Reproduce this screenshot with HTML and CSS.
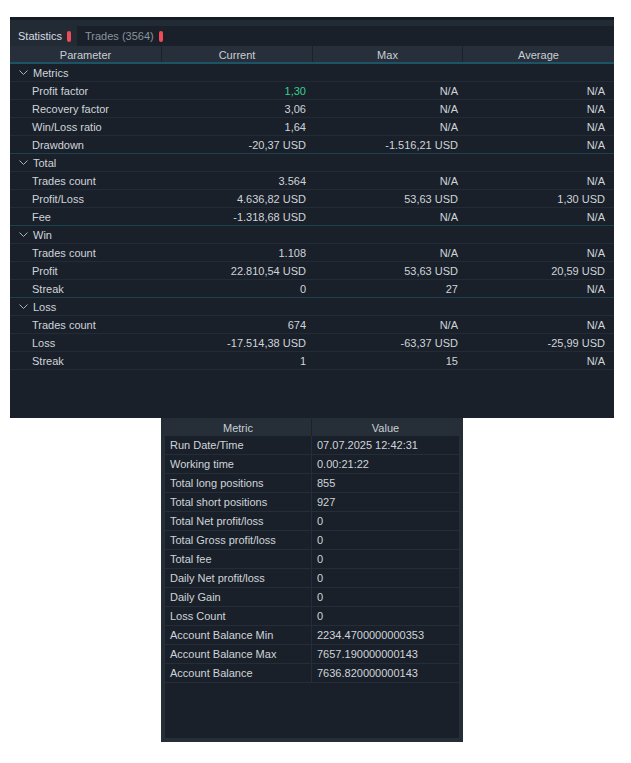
FILE: index.html
```html
<!DOCTYPE html>
<html>
<head>
<meta charset="utf-8">
<link rel="stylesheet" href="styles.css">
</head>
<body>
<div class="stats">
  <div class="topstrip"></div>
  <div class="tabs">
    <div class="tab active">Statistics <span class="pill"></span></div>
    <div class="tab">Trades (3564) <span class="pill"></span></div>
  </div>
  <div class="grid head">
    <div>Parameter</div><div>Current</div><div>Max</div><div>Average</div>
  </div>
  <div class="body">
    <div class="row sec"><div class="lbl"><svg class="chev" width="9" height="6" viewBox="0 0 9 6"><polyline points="0.5,0.5 4.5,4.5 8.5,0.5" fill="none" stroke="#aab2bb" stroke-width="1"/></svg>Metrics</div></div>
    <div class="row grid"><div class="lbl">Profit factor</div><div class="green">1,30</div><div>N/A</div><div>N/A</div></div>
    <div class="row grid"><div class="lbl">Recovery factor</div><div>3,06</div><div>N/A</div><div>N/A</div></div>
    <div class="row grid"><div class="lbl">Win/Loss ratio</div><div>1,64</div><div>N/A</div><div>N/A</div></div>
    <div class="row grid end"><div class="lbl">Drawdown</div><div>-20,37 USD</div><div>-1.516,21 USD</div><div>N/A</div></div>
    <div class="row sec"><div class="lbl"><svg class="chev" width="9" height="6" viewBox="0 0 9 6"><polyline points="0.5,0.5 4.5,4.5 8.5,0.5" fill="none" stroke="#aab2bb" stroke-width="1"/></svg>Total</div></div>
    <div class="row grid"><div class="lbl">Trades count</div><div>3.564</div><div>N/A</div><div>N/A</div></div>
    <div class="row grid"><div class="lbl">Profit/Loss</div><div>4.636,82 USD</div><div>53,63 USD</div><div>1,30 USD</div></div>
    <div class="row grid end"><div class="lbl">Fee</div><div>-1.318,68 USD</div><div>N/A</div><div>N/A</div></div>
    <div class="row sec"><div class="lbl"><svg class="chev" width="9" height="6" viewBox="0 0 9 6"><polyline points="0.5,0.5 4.5,4.5 8.5,0.5" fill="none" stroke="#aab2bb" stroke-width="1"/></svg>Win</div></div>
    <div class="row grid"><div class="lbl">Trades count</div><div>1.108</div><div>N/A</div><div>N/A</div></div>
    <div class="row grid"><div class="lbl">Profit</div><div>22.810,54 USD</div><div>53,63 USD</div><div>20,59 USD</div></div>
    <div class="row grid end"><div class="lbl">Streak</div><div>0</div><div>27</div><div>N/A</div></div>
    <div class="row sec"><div class="lbl"><svg class="chev" width="9" height="6" viewBox="0 0 9 6"><polyline points="0.5,0.5 4.5,4.5 8.5,0.5" fill="none" stroke="#aab2bb" stroke-width="1"/></svg>Loss</div></div>
    <div class="row grid"><div class="lbl">Trades count</div><div>674</div><div>N/A</div><div>N/A</div></div>
    <div class="row grid"><div class="lbl">Loss</div><div>-17.514,38 USD</div><div>-63,37 USD</div><div>-25,99 USD</div></div>
    <div class="row grid"><div class="lbl">Streak</div><div>1</div><div>15</div><div>N/A</div></div>
  </div>
</div>
<div class="metrics">
  <div class="inner">
    <div class="mhead"><div>Metric</div><div>Value</div></div>
    <div class="mrow"><div>Run Date/Time</div><div>07.07.2025 12:42:31</div></div>
    <div class="mrow"><div>Working time</div><div>0.00:21:22</div></div>
    <div class="mrow"><div>Total long positions</div><div>855</div></div>
    <div class="mrow"><div>Total short positions</div><div>927</div></div>
    <div class="mrow"><div>Total Net profit/loss</div><div>0</div></div>
    <div class="mrow"><div>Total Gross profit/loss</div><div>0</div></div>
    <div class="mrow"><div>Total fee</div><div>0</div></div>
    <div class="mrow"><div>Daily Net profit/loss</div><div>0</div></div>
    <div class="mrow"><div>Daily Gain</div><div>0</div></div>
    <div class="mrow"><div>Loss Count</div><div>0</div></div>
    <div class="mrow"><div>Account Balance Min</div><div>2234.4700000000353</div></div>
    <div class="mrow"><div>Account Balance Max</div><div>7657.190000000143</div></div>
    <div class="mrow"><div>Account Balance</div><div>7636.820000000143</div></div>
  </div>
</div>
</body>
</html>
```
FILE: styles.css
```css
html, body {
  margin: 0;
  padding: 0;
  background: #ffffff;
}
body {
  font-family: "Liberation Sans", Arial, sans-serif;
  font-size: 11px;
  color: #d0d4d9;
}
.stats {
  margin: 17px 0 0 10px;
  width: 604px;
  height: 401px;
  background: #19202a;
  display: flex;
  flex-direction: column;
}
.topstrip {
  height: 3px;
  background: #161c25;
  border-bottom: 6px solid #222a34;
}
.tabs {
  display: flex;
  height: 20px;
  align-items: stretch;
}
.tab {
  display: flex;
  align-items: center;
  gap: 5px;
  padding: 0 6px 0 8px;
  color: #8c939b;
}
.tab.active {
  background: #222a34;
  color: #d8dce0;
}
.pill {
  display: inline-block;
  width: 4px;
  height: 11px;
  border-radius: 2px;
  background: #f04c55;
}
.grid {
  display: grid;
  grid-template-columns: 152px 151px 150px 151px;
}
.head {
  height: 16px;
  background: #27303a;
  border-bottom: 2px solid #1d5367;
}
.head > div {
  display: flex;
  align-items: center;
  justify-content: center;
  padding-top: 2px;
  border-right: 1px solid #1b222c;
  color: #c9ced4;
}
.head > div:last-child {
  border-right: none;
}
.row {
  height: 17px;
  border-bottom: 1px solid #232c36;
}
.row.end {
  border-bottom-color: #1b4150;
}
.row > div {
  display: flex;
  align-items: center;
  justify-content: flex-end;
  padding-right: 7px;
}
.row > div:nth-child(3) {
  padding-right: 5px;
}
.row > div:nth-child(4) {
  padding-right: 9px;
}
.row > div.lbl {
  justify-content: flex-start;
  padding-left: 22px;
  padding-right: 0;
}
.row.sec > div.lbl {
  padding-left: 9px;
  height: 17px;
}
.chev {
  margin-right: 5px;
  margin-top: 1px;
}
.green {
  color: #3ccc8a;
}
.metrics {
  margin-left: 161px;
  width: 302px;
  height: 324px;
  box-sizing: border-box;
  background: #252d37;
  padding: 1px 4px 4px 4px;
  display: flex;
}
.inner {
  flex: 1;
  background: #19202a;
  display: flex;
  flex-direction: column;
}
.mhead {
  display: grid;
  grid-template-columns: 147px 147px;
  height: 17px;
  background: #262e38;
}
.mhead > div {
  display: flex;
  align-items: center;
  justify-content: center;
  border-right: 1px solid #1b222c;
  color: #c9ced4;
}
.mhead > div:last-child {
  border-right: none;
}
.mrow {
  display: grid;
  grid-template-columns: 147px 147px;
  height: 18px;
  border-bottom: 1px solid #252e38;
}
.mrow > div {
  display: flex;
  align-items: center;
  padding-left: 5px;
  border-right: 1px solid #252e38;
}
.mrow > div:last-child {
  border-right: none;
}
```
